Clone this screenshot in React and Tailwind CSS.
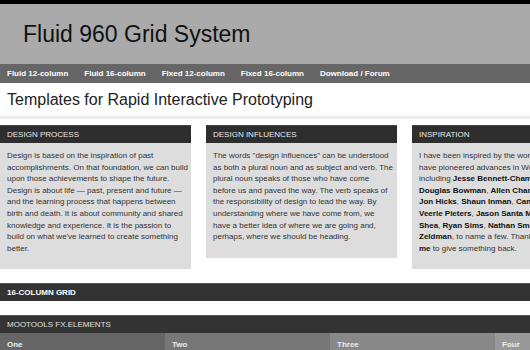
// Fluid 960 Grid System – demo page header, three content boxes, grid bands
const NAV = ['Fluid 12-column', 'Fluid 16-column', 'Fixed 12-column', 'Fixed 16-column', 'Download / Forum']

const PROCESS = [
  'Design is based on the inspiration of past',
  'accomplishments. On that foundation, we can build',
  'upon those achievements to shape the future.',
  'Design is about life — past, present and future —',
  'and the learning process that happens between',
  'birth and death. It is about community and shared',
  'knowledge and experience. It is the passion to',
  "build on what we've learned to create something",
  'better.',
]

const INFLUENCES = [
  'The words "design influences" can be understood',
  'as both a plural noun and as subject and verb. The',
  'plural noun speaks of those who have come',
  'before us and paved the way. The verb speaks of',
  'the responsibility of design to lead the way. By',
  'understanding where we have come from, we',
  'have a better idea of where we are going and,',
  'perhaps, where we should be heading.',
]

const B = ({ children }) => <b className="font-bold text-[#111]">{children}</b>

const INSPIRATION = [
  <>I have been inspired by the work of many people who</>,
  <>have pioneered advances in Web design,</>,
  <>including <B>Jesse Bennett-Chamberlain</B>,</>,
  <><B>Douglas Bowman</B>, <B>Allen Chang</B>, <B>Dan Cederholm</B>,</>,
  <><B>Jon Hicks</B>, <B>Shaun Inman</B>, <B>Cameron Moll</B>,</>,
  <><B>Veerle Pieters</B>, <B>Jason Santa Maria</B>, <B>Dave</B></>,
  <><B>Shea</B>, <B>Ryan Sims</B>, <B>Nathan Smith</B>, and <B>Jeffrey</B></>,
  <><B>Zeldman</B>, to name a few. Thanks for inspiring</>,
  <><B>me</B> to give something back.</>,
]

function Box({ title, lines }) {
  return (
    <div className="w-[191px] shrink-0">
      <div className="flex h-[18px] items-center border-t border-[#444] bg-[#2e2e2e] pl-[7px] text-[8px] uppercase text-[#e8e8e8]">{title}</div>
      <div className="overflow-hidden bg-[#dddddd] px-[7px] pt-[7px] pb-[15px] text-[8px] leading-[11.6px] text-[#333]">
        {lines.map((l, i) => (
          <div key={i} className="whitespace-nowrap">{l}</div>
        ))}
      </div>
    </div>
  )
}

export default function App() {
  return (
    <div className="h-[350px] w-[530px] overflow-hidden bg-white font-['Liberation_Sans',Arial,sans-serif]">
      <div className="h-[4px] bg-black" />
      <div className="flex h-[60px] items-center bg-[#aaaaaa] pl-[23px] text-[23px] text-[#111]">Fluid 960 Grid System</div>
      <nav className="flex h-[19px] items-center gap-[16px] bg-[#666666] pl-[7px] text-[8px] font-bold text-white">
        {NAV.map((n) => (
          <span key={n} className="whitespace-nowrap">{n}</span>
        ))}
      </nav>
      <h2 className="flex h-[36px] items-center border-b-[3px] border-[#ebebeb] pl-[7px] text-[16px] text-[#222]">
        Templates for Rapid Interactive Prototyping
      </h2>
      <div className="mt-[6px] flex items-start gap-[15px]">
        <Box title="Design Process" lines={PROCESS} />
        <Box title="Design Influences" lines={INFLUENCES} />
        <Box title="Inspiration" lines={INSPIRATION} />
      </div>
      <div className="mt-[14px] flex h-[18px] items-center border-t border-[#555] bg-[#333] pl-[7px] text-[8px] font-bold text-white">
        16-COLUMN GRID
      </div>
      <div className="mt-[14px] flex h-[18px] items-center border-t border-[#555] bg-[#333] pl-[7px] text-[8px] text-[#e0e0e0]">
        MOOTOOLS FX.ELEMENTS
      </div>
      <div className="grid h-[16px] grid-cols-[165px_165px_165px_165px] text-[8px] font-bold text-[#eee]">
        <div className="bg-[#666] pl-[7px] pt-[6px]">One</div>
        <div className="bg-[#777] pl-[7px] pt-[6px]">Two</div>
        <div className="bg-[#888] pl-[7px] pt-[6px]">Three</div>
        <div className="bg-[#999] pl-[7px] pt-[6px]">Four</div>
      </div>
    </div>
  )
}
